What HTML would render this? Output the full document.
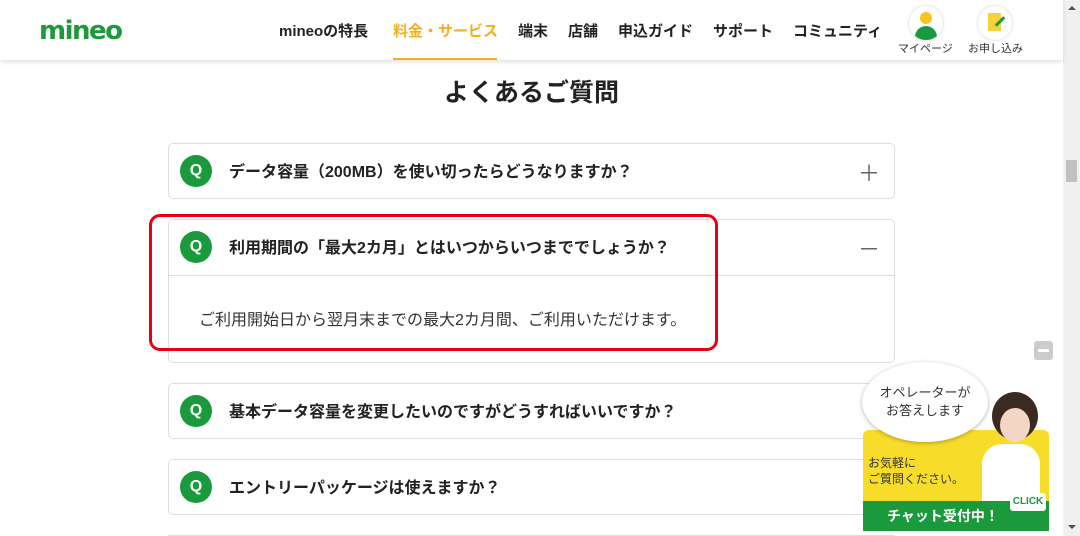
<!DOCTYPE html>
<html style="width:1080px;height:536px;overflow:hidden"><head><meta charset="utf-8"><style>
*{margin:0;padding:0;box-sizing:border-box}
body{width:1080px;height:536px;overflow:hidden;background:#fff;font-family:"Liberation Sans","Noto Sans CJK JP",sans-serif;color:#222;position:relative}
.hdr{position:absolute;left:0;top:0;width:1063px;height:60px;background:#fff;box-shadow:0 2px 4px rgba(0,0,0,.12);z-index:2}
.logo{position:absolute;left:39px;top:16px;font:bold 26px "DejaVu Sans",sans-serif;color:#1e9a3a;letter-spacing:-1.5px}
.nav{position:absolute;top:20px;font-size:15px;font-weight:bold;color:#222;white-space:nowrap}
.ic{position:absolute;top:6px;width:34px;height:34px;border-radius:50%;background:#fff;box-shadow:0 0 3px rgba(0,0,0,.2);overflow:hidden}
.lbl{position:absolute;top:40px;font-size:11px;color:#333;white-space:nowrap}
.sb{position:absolute;right:0;top:0;width:17px;height:536px;background:#f0f0f0}
h1{position:absolute;top:73px;left:0;width:1063px;text-align:center;font-size:25px;font-weight:bold}
.card{position:absolute;left:168px;width:727px;border:1px solid #ddd;border-radius:5px;background:#fff}
.q{position:absolute;left:11px;width:32px;height:32px;border-radius:50%;background:#1a9a3c;color:#fff;font-weight:bold;font-size:16px;text-align:center;line-height:32px}
.qt{position:absolute;left:60px;font-size:16px;font-weight:bold;white-space:nowrap}
.pm{position:absolute;right:14px;font-size:22px;color:#666;font-weight:normal}
</style></head><body>
<div class="hdr">
<div class="logo">mineo</div>
<div class="nav" style="left:279px">mineoの特長</div>
<div class="nav" style="left:393px;color:#f0b020">料金・サービス</div>
<div style="position:absolute;left:393px;top:58px;width:104px;height:2px;background:#f0b020"></div>
<div class="nav" style="left:518px">端末</div>
<div class="nav" style="left:568px">店舗</div>
<div class="nav" style="left:618px">申込ガイド</div>
<div class="nav" style="left:713px">サポート</div>
<div class="nav" style="left:793px">コミュニティ</div>
<div class="ic" style="left:909px"><div style="position:absolute;left:11px;top:6px;width:12px;height:12px;border-radius:50%;background:#f7c51e"></div><div style="position:absolute;left:6px;top:20px;width:22px;height:16px;border-radius:11px 11px 0 0;background:#1a9a3c"></div></div>
<div class="ic" style="left:978px"><div style="position:absolute;left:10px;top:7px;width:13px;height:18px;background:#f7d23a"></div><div style="position:absolute;left:16px;top:14px;width:12px;height:3px;background:#1a9a3c;transform:rotate(-45deg)"></div></div>
<div class="lbl" style="left:898px">マイページ</div>
<div class="lbl" style="left:968px">お申し込み</div>
</div>
<div class="sb"><div style="position:absolute;left:3px;top:160px;width:11px;height:22px;background:#c1c1c1"></div><div style="position:absolute;left:5px;top:6px;border:4px solid transparent;border-bottom-color:#505050;border-top:0"></div><div style="position:absolute;left:5px;top:525px;border:4px solid transparent;border-top-color:#505050;border-bottom:0"></div></div>
<h1>よくあるご質問</h1>
<div class="card" style="top:143px;height:56px"><div class="q" style="top:11px">Q</div><div class="qt" style="top:14px">データ容量（200MB）を使い切ったらどうなりますか？</div><div class="pm" style="top:12px">＋</div></div>
<div class="card" style="top:219px;height:144px"><div class="q" style="top:11px">Q</div><div class="qt" style="top:14px">利用期間の「最大2カ月」とはいつからいつまででしょうか？</div><div class="pm" style="top:12px">－</div>
<div style="position:absolute;left:0;right:0;top:55px;border-top:1px solid #ddd"></div>
<div style="position:absolute;left:30px;top:86px;font-size:16px;color:#333;white-space:nowrap">ご利用開始日から翌月末までの最大2カ月間、ご利用いただけます。</div></div>
<div style="position:absolute;left:149px;top:214px;width:569px;height:137px;border:3px solid #e60012;border-radius:11px"></div>
<div class="card" style="top:383px;height:56px"><div class="q" style="top:11px">Q</div><div class="qt" style="top:14px">基本データ容量を変更したいのですがどうすればいいですか？</div></div>
<div class="card" style="top:459px;height:56px"><div class="q" style="top:11px">Q</div><div class="qt" style="top:14px">エントリーパッケージは使えますか？</div></div>
<div style="position:absolute;left:168px;top:535px;width:727px;height:1px;background:#ddd"></div>
<div style="position:absolute;left:1034px;top:341px;width:19px;height:19px;background:#ccc;border-radius:3px"><div style="position:absolute;left:4px;top:8px;width:11px;height:3px;background:#fff"></div></div>
<div style="position:absolute;left:863px;top:430px;width:186px;height:101px;background:#f8dc2a;border-radius:6px 6px 0 0"></div>
<div style="position:absolute;left:990px;top:392px;width:48px;height:109px;"><div style="position:absolute;left:2px;top:0;width:46px;height:48px;border-radius:50%;background:#3a2a20"></div><div style="position:absolute;left:10px;top:16px;width:30px;height:34px;border-radius:50%;background:#f3d6c4"></div><div style="position:absolute;left:-8px;top:52px;width:58px;height:57px;border-radius:20px 20px 0 0;background:#fff"></div></div>
<div style="position:absolute;left:868px;top:455px;font-size:12px;line-height:16px;color:#333">お気軽に<br>ご質問ください。</div>
<div style="position:absolute;left:863px;top:501px;width:186px;height:30px;background:#1a9a3c;color:#fff;font-weight:bold;font-size:14px;line-height:30px;padding-left:24px">チャット受付中！</div>
<div style="position:absolute;left:1010px;top:493px;width:36px;height:18px;background:#fff;border-radius:3px;color:#1a9a3c;font-size:10px;font-weight:bold;text-align:center;line-height:18px">CLICK</div>
<div style="position:absolute;left:862px;top:362px;width:126px;height:80px;border-radius:50%;background:#fff;box-shadow:0 1px 4px rgba(0,0,0,.3);text-align:center;font-size:13px;line-height:18px;padding-top:22px;color:#333">オペレーターが<br>お答えします</div>
</body></html>
